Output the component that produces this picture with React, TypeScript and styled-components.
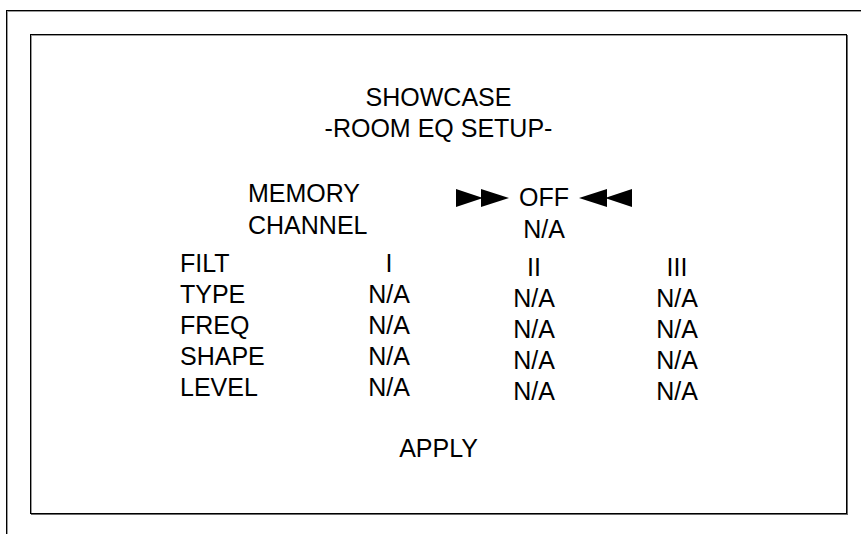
import styled, { createGlobalStyle } from 'styled-components';

const GlobalStyle = createGlobalStyle`
  html, body {
    margin: 0;
    padding: 0;
    background: #fff;
    overflow: hidden;
  }
  body {
    font-family: "Liberation Sans", Arial, sans-serif;
    color: #000;
  }
`;

const memory = [
  { label: 'MEMORY', value: 'OFF', arrows: true },
  { label: 'CHANNEL', value: 'N/A', arrows: false },
];

const filters = [
  { label: 'FILT', values: ['I', 'II', 'III'] },
  { label: 'TYPE', values: ['N/A', 'N/A', 'N/A'] },
  { label: 'FREQ', values: ['N/A', 'N/A', 'N/A'] },
  { label: 'SHAPE', values: ['N/A', 'N/A', 'N/A'] },
  { label: 'LEVEL', values: ['N/A', 'N/A', 'N/A'] },
];

const Arrows = ({ dir }: { dir: 'right' | 'left' }) => (
  <ArrowSvg width="53" height="18" viewBox="0 0 53 18">
    {dir === 'right' ? (
      <>
        <polygon points="0,0 27,9 0,18" />
        <polygon points="25,0 53,9 25,18" />
      </>
    ) : (
      <>
        <polygon points="0,9 28,0 28,18" />
        <polygon points="26,9 53,0 53,18" />
      </>
    )}
  </ArrowSvg>
);

const App = () => {
  return (
    <>
      <GlobalStyle />
      <Frame>
        <Screen>
          <Title>
            <div>SHOWCASE</div>
            <div>-ROOM EQ SETUP-</div>
          </Title>

          <MemoryGrid>
            {memory.map((row) => (
              <MemoryRow key={row.label}>
                <Label>{row.label}</Label>
                <MemoryValue>
                  {row.arrows && <Arrows dir="right" />}
                  <span>{row.value}</span>
                  {row.arrows && <Arrows dir="left" />}
                </MemoryValue>
              </MemoryRow>
            ))}
          </MemoryGrid>

          <FilterGrid>
            {filters.map((row) => (
              <FilterRow key={row.label}>
                <Label>{row.label}</Label>
                {row.values.map((v, i) => (
                  <Cell key={i} $lower={i > 0}>
                    {v}
                  </Cell>
                ))}
              </FilterRow>
            ))}
          </FilterGrid>

          <Apply>APPLY</Apply>
        </Screen>
      </Frame>
    </>
  );
};

export default App;

const Frame = styled.div`
  margin: 10px 0 0 6px;
  width: 920px;
  height: 600px;
  border: 1px solid #000;
  box-shadow: 1px 1px 0 #9a9a9a, inset 1px 1px 0 #9a9a9a;
  padding: 23px 0 0 23px;
  box-sizing: border-box;
`;

const Screen = styled.div`
  width: 817px;
  height: 480px;
  box-sizing: border-box;
  border: 1px solid #000;
  box-shadow: 1px 1px 0 #6a6a6a, inset 1px 1px 0 #9a9a9a;
  padding-top: 47px;
  display: flex;
  flex-direction: column;
  font-size: 25px;
  line-height: 31px;
`;

const Title = styled.div`
  text-align: center;
`;

const MemoryGrid = styled.div`
  margin-top: 34px;
  padding-left: 217px;
  display: grid;
`;

const MemoryRow = styled.div`
  display: grid;
  grid-template-columns: 200px 192px;
  height: 32px;
  align-items: start;
`;

const Label = styled.div`
  white-space: nowrap;
`;

const MemoryValue = styled.div`
  display: flex;
  justify-content: center;
  align-items: center;
  gap: 10px;
  padding-top: 4px;
  height: 31px;
`;

const ArrowSvg = styled.svg`
  fill: #000;
  flex: none;
`;

const FilterGrid = styled.div`
  margin-top: 6px;
  padding-left: 149px;
  display: grid;
`;

const FilterRow = styled.div`
  display: grid;
  grid-template-columns: 150px 118px 172px 114px;
  height: 31px;
`;

const Cell = styled.div<{ $lower?: boolean }>`
  text-align: center;
  padding-top: ${(p) => (p.$lower ? '4px' : '0')};
`;

const Apply = styled.div`
  margin-top: 30px;
  text-align: center;
`;
